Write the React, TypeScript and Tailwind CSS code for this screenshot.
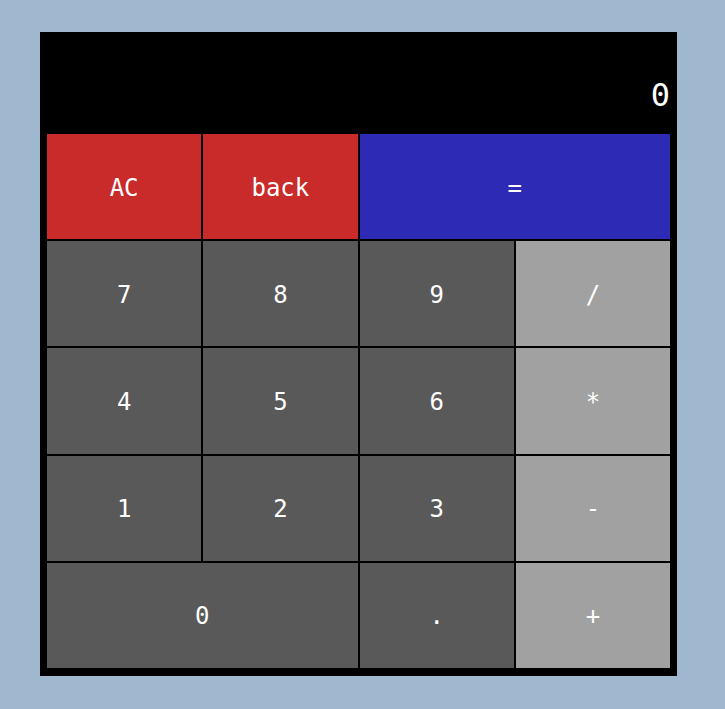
import React from "react";

const font = { fontFamily: '"DejaVu Sans Mono", "Liberation Mono", monospace' };

export default function App() {
  const dark = "bg-[#595959]";
  const light = "bg-[#a1a1a2]";
  const red = "bg-[#c92a2a]";
  const btn = "flex items-center justify-center text-white text-[24px] pt-[2px]";
  return (
    <div className="w-[725px] h-[709px] bg-[#a0b8cf] pt-[32px] pl-[40px]" style={font}>
      <div className="w-[637px] h-[644px] bg-black px-[7px] pt-[7px] pb-[8px] flex flex-col">
        <div className="h-[95px] flex items-end justify-end pb-[23px] text-white text-[32px] leading-[32px]">
          0
        </div>
        <div className="grid grid-cols-4 grid-rows-5 h-[534px] gap-[2px] bg-black">
          <div className={`${btn} ${red}`}>AC</div>
          <div className={`${btn} ${red}`}>back</div>
          <div className={`${btn} bg-[#2d2ab5] col-span-2`}>=</div>
          <div className={`${btn} ${dark}`}>7</div>
          <div className={`${btn} ${dark}`}>8</div>
          <div className={`${btn} ${dark}`}>9</div>
          <div className={`${btn} ${light}`}>/</div>
          <div className={`${btn} ${dark}`}>4</div>
          <div className={`${btn} ${dark}`}>5</div>
          <div className={`${btn} ${dark}`}>6</div>
          <div className={`${btn} ${light}`}>*</div>
          <div className={`${btn} ${dark}`}>1</div>
          <div className={`${btn} ${dark}`}>2</div>
          <div className={`${btn} ${dark}`}>3</div>
          <div className={`${btn} ${light}`}>-</div>
          <div className={`${btn} ${dark} col-span-2`}>0</div>
          <div className={`${btn} ${dark}`}>.</div>
          <div className={`${btn} ${light}`}>+</div>
        </div>
      </div>
    </div>
  );
}
